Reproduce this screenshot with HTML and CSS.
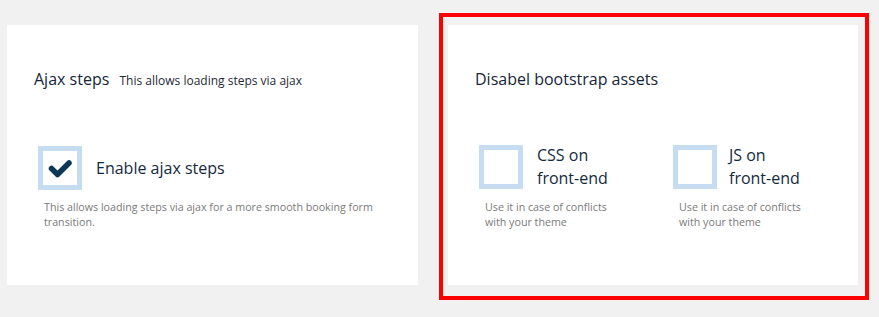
FILE: index.html
```html
<!DOCTYPE html>
<html>
<head>
<meta charset="utf-8">
<link rel="stylesheet" href="styles.css">
</head>
<body>
<div class="page">
  <section class="card">
    <h2 class="title">Ajax steps <small class="hint">This allows loading steps via ajax</small></h2>
    <div class="options">
      <div class="option wide">
        <div class="row">
          <span class="box">
            <svg viewBox="0 0 44 44" width="44" height="44"><path d="M13.5 22.5 L19.5 28.5 L31 17" fill="none" stroke="#0d3756" stroke-width="5.5" stroke-linecap="round" stroke-linejoin="round"/></svg>
          </span>
          <span class="label">Enable ajax steps</span>
        </div>
        <p class="desc">This allows loading steps via ajax for a more smooth booking form transition.</p>
      </div>
    </div>
  </section>
  <section class="card">
    <h2 class="title">Disabel bootstrap assets</h2>
    <div class="options">
      <div class="option">
        <div class="row">
          <span class="box"></span>
          <span class="label">CSS on front-end</span>
        </div>
        <p class="desc">Use it in case of conflicts with your theme</p>
      </div>
      <div class="option">
        <div class="row">
          <span class="box"></span>
          <span class="label js">JS on front-end</span>
        </div>
        <p class="desc">Use it in case of conflicts with your theme</p>
      </div>
    </div>
  </section>
  <div class="highlight"></div>
</div>
</body>
</html>
```
FILE: styles.css
```css
html, body {
  margin: 0;
  padding: 0;
  background: #f1f1f1;
}
body {
  font-family: "Open Sans", "Noto Sans", sans-serif;
  width: 879px;
  height: 317px;
  overflow: hidden;
}
.page {
  position: relative;
  display: flex;
  gap: 30px;
  padding: 25px 0 0 7px;
}
.card {
  box-sizing: border-box;
  width: 411px;
  height: 260px;
  background: #fff;
  padding: 43px 0 0 27px;
}
.card + .card {
  width: 410px;
}
.title {
  margin: 0;
  font-size: 16px;
  font-weight: 400;
  line-height: 22px;
  color: #152638;
  white-space: nowrap;
}
.hint {
  font-size: 12px;
  color: #1f2a36;
  margin-left: 6px;
}
.options {
  display: flex;
  gap: 59px;
  margin-top: 54px;
  padding-left: 4px;
}
.option {
  width: 135px;
}
.option.wide {
  width: 350px;
}
.row {
  display: flex;
  align-items: center;
  gap: 14px;
}
.box {
  box-sizing: border-box;
  flex: none;
  width: 44px;
  height: 44px;
  border: 5px solid #c6ddf1;
  background: #fff;
  position: relative;
}
.box svg {
  position: absolute;
  left: -5px;
  top: -5px;
}
.label {
  font-size: 16px;
  line-height: 23px;
  color: #142a40;
}
.label.js {
  margin-left: -2px;
}
.desc {
  margin: 10px 0 0 6px;
  font-size: 10.7px;
  line-height: 15px;
  color: #7a7a7a;
}
.highlight {
  position: absolute;
  left: 439px;
  top: 13px;
  width: 430px;
  height: 287px;
  box-sizing: border-box;
  border: 4px solid #ff0000;
  pointer-events: none;
}
```
